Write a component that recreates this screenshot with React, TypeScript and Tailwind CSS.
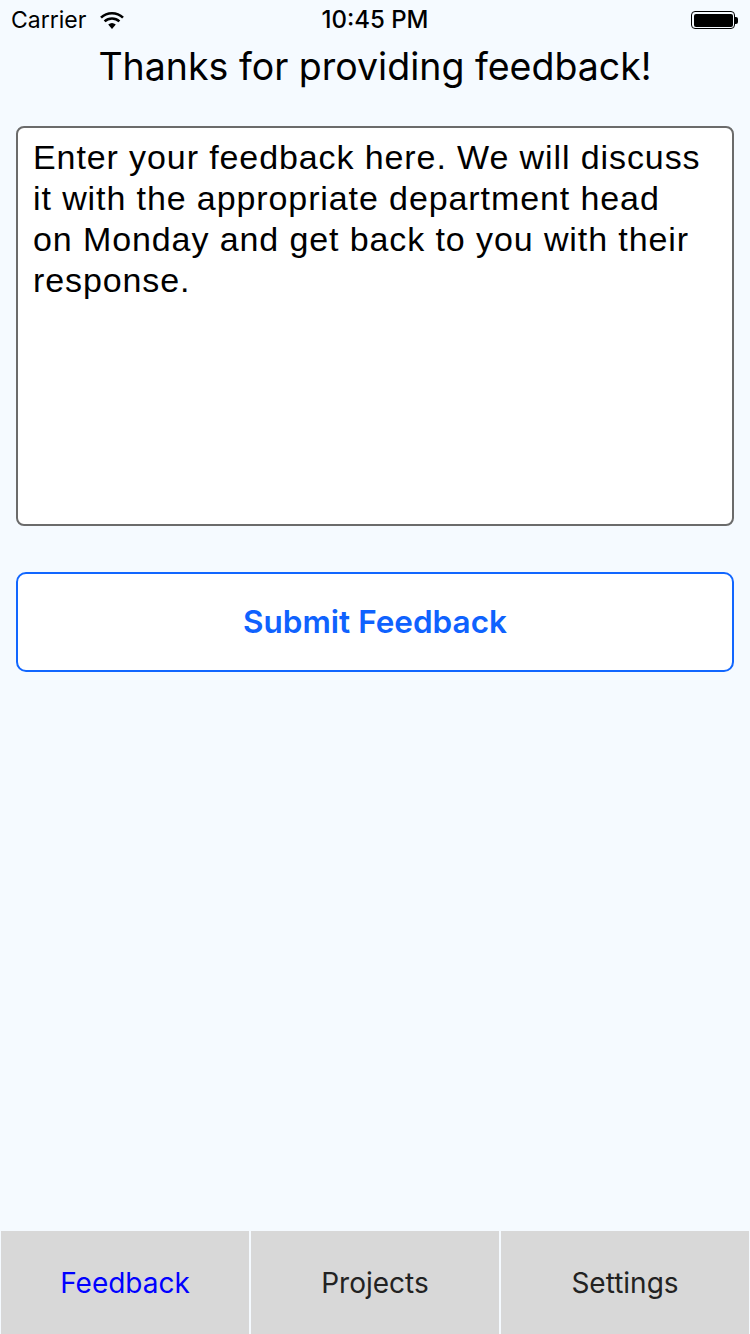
import React from "react";

export default function App() {
  return (
    <div className="w-[750px] h-[1334px] bg-[#f5faff] flex flex-col" style={{ fontFamily: "Inter, Roboto, sans-serif" }}>
      {/* Status bar */}
      <div className="h-[40px] flex items-center pl-[11px] pr-[12px] relative shrink-0">
        <div className="flex items-center gap-[13px]">
          <span className="text-[23px] text-black leading-none">Carrier</span>
          <svg width="26" height="19" viewBox="0 0 26 19">
            <path d="M13 18 L9.2 13.6 A6 6 0 0 1 16.8 13.6 Z" fill="#000" />
            <path d="M5.6 10.4 A11 11 0 0 1 20.4 10.4" stroke="#000" strokeWidth="2.6" fill="none" />
            <path d="M2 6.6 A16 16 0 0 1 24 6.6" stroke="#000" strokeWidth="2.6" fill="none" />
          </svg>
        </div>
        <div className="absolute left-0 right-0 top-0 h-[40px] flex items-center justify-center pointer-events-none">
          <span className="text-[24px] font-medium text-black leading-none">10:45 PM</span>
        </div>
        <div className="ml-auto flex items-center">
          <div className="w-[44px] h-[18px] rounded-[4px] border-[1.5px] border-black p-[1.5px]">
            <div className="w-full h-full bg-black rounded-[2px]" />
          </div>
          <div className="w-[3px] h-[7px] bg-black rounded-r-[2px]" />
        </div>
      </div>

      {/* Title */}
      <div className="h-[54px] flex items-center justify-center shrink-0">
        <h1 className="text-[37.5px] text-black font-normal leading-none">Thanks for providing feedback!</h1>
      </div>

      {/* Textarea */}
      <div className="px-[16px] mt-[32px] shrink-0">
        <div
          className="h-[400px] bg-white border-2 border-[#6b6b6b] rounded-[8px] pl-[15px] pr-[28px] pt-[9px] text-[34px] leading-[41px] tracking-[0.9px] text-black"
          style={{ fontFamily: '"Liberation Sans", Arial, sans-serif' }}
        >
          Enter your feedback here. We will discuss it with the appropriate department head on Monday and get back to you with their response.
        </div>
      </div>

      {/* Button */}
      <div className="px-[16px] mt-[46px] shrink-0">
        <button className="w-full h-[100px] bg-white border-2 border-[#1166ff] rounded-[10px] flex items-center justify-center">
          <span className="text-[31.5px] font-semibold text-[#0f62fe]">Submit Feedback</span>
        </button>
      </div>

      <div className="flex-1" />

      {/* Tab bar */}
      <div className="h-[103px] flex gap-[2px] px-[1px] shrink-0">
        <div className="flex-1 bg-[#d8d8d8] flex items-center justify-center">
          <span className="text-[28px] text-[#0000ff]">Feedback</span>
        </div>
        <div className="flex-1 bg-[#d8d8d8] flex items-center justify-center">
          <span className="text-[28px] text-[#222]">Projects</span>
        </div>
        <div className="flex-1 bg-[#d8d8d8] flex items-center justify-center">
          <span className="text-[28px] text-[#222]">Settings</span>
        </div>
      </div>
    </div>
  );
}
